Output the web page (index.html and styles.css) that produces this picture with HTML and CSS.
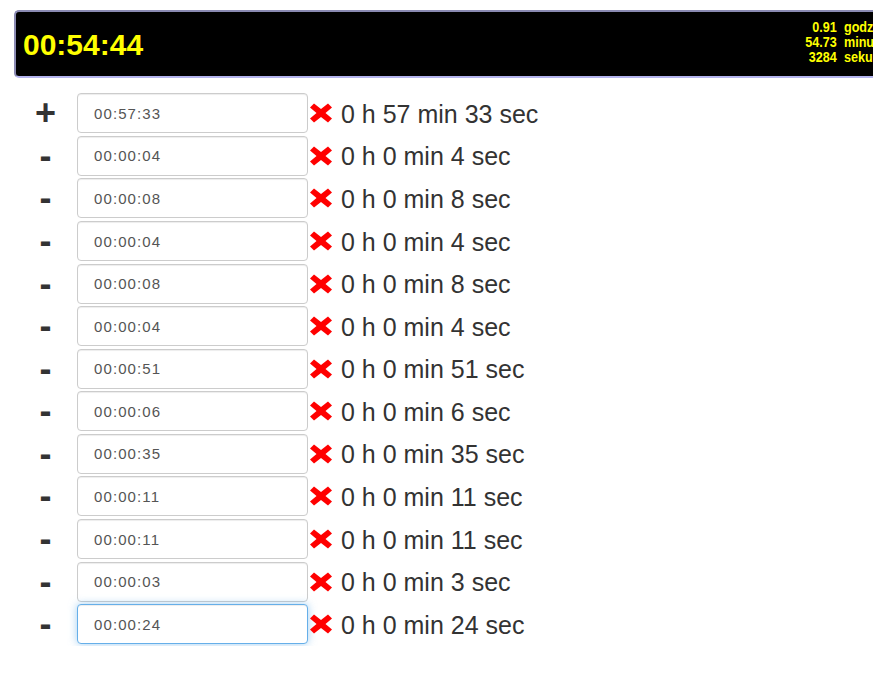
FILE: index.html
```html
<!DOCTYPE html>
<html lang="pl">
<head>
<meta charset="utf-8">
<title>Timer</title>
<link rel="stylesheet" href="styles.css">
</head>
<body>
<div class="display">
  <div class="clock">00:54:44</div>
  <table class="summary">
    <tr><td class="num">0.91</td><td class="unit">godzin</td></tr>
    <tr><td class="num">54.73</td><td class="unit">minut</td></tr>
    <tr><td class="num">3284</td><td class="unit">sekund</td></tr>
  </table>
</div>
<div class="rows">
  <div class="row"><span class="sign">+</span><input class="field" type="text" value="00:57:33"><svg class="del" viewBox="0 0 22 20"><path d="M0 4.5 L4 0.5 L11 6 L18 0.5 L22 4.5 L15.5 10 L22 15.5 L18 19.5 L11 14 L4 19.5 L0 15.5 L6.5 10 Z"/></svg><span class="label">0 h 57 min 33 sec</span></div>
  <div class="row"><span class="sign">-</span><input class="field" type="text" value="00:00:04"><svg class="del" viewBox="0 0 22 20"><path d="M0 4.5 L4 0.5 L11 6 L18 0.5 L22 4.5 L15.5 10 L22 15.5 L18 19.5 L11 14 L4 19.5 L0 15.5 L6.5 10 Z"/></svg><span class="label">0 h 0 min 4 sec</span></div>
  <div class="row"><span class="sign">-</span><input class="field" type="text" value="00:00:08"><svg class="del" viewBox="0 0 22 20"><path d="M0 4.5 L4 0.5 L11 6 L18 0.5 L22 4.5 L15.5 10 L22 15.5 L18 19.5 L11 14 L4 19.5 L0 15.5 L6.5 10 Z"/></svg><span class="label">0 h 0 min 8 sec</span></div>
  <div class="row"><span class="sign">-</span><input class="field" type="text" value="00:00:04"><svg class="del" viewBox="0 0 22 20"><path d="M0 4.5 L4 0.5 L11 6 L18 0.5 L22 4.5 L15.5 10 L22 15.5 L18 19.5 L11 14 L4 19.5 L0 15.5 L6.5 10 Z"/></svg><span class="label">0 h 0 min 4 sec</span></div>
  <div class="row"><span class="sign">-</span><input class="field" type="text" value="00:00:08"><svg class="del" viewBox="0 0 22 20"><path d="M0 4.5 L4 0.5 L11 6 L18 0.5 L22 4.5 L15.5 10 L22 15.5 L18 19.5 L11 14 L4 19.5 L0 15.5 L6.5 10 Z"/></svg><span class="label">0 h 0 min 8 sec</span></div>
  <div class="row"><span class="sign">-</span><input class="field" type="text" value="00:00:04"><svg class="del" viewBox="0 0 22 20"><path d="M0 4.5 L4 0.5 L11 6 L18 0.5 L22 4.5 L15.5 10 L22 15.5 L18 19.5 L11 14 L4 19.5 L0 15.5 L6.5 10 Z"/></svg><span class="label">0 h 0 min 4 sec</span></div>
  <div class="row"><span class="sign">-</span><input class="field" type="text" value="00:00:51"><svg class="del" viewBox="0 0 22 20"><path d="M0 4.5 L4 0.5 L11 6 L18 0.5 L22 4.5 L15.5 10 L22 15.5 L18 19.5 L11 14 L4 19.5 L0 15.5 L6.5 10 Z"/></svg><span class="label">0 h 0 min 51 sec</span></div>
  <div class="row"><span class="sign">-</span><input class="field" type="text" value="00:00:06"><svg class="del" viewBox="0 0 22 20"><path d="M0 4.5 L4 0.5 L11 6 L18 0.5 L22 4.5 L15.5 10 L22 15.5 L18 19.5 L11 14 L4 19.5 L0 15.5 L6.5 10 Z"/></svg><span class="label">0 h 0 min 6 sec</span></div>
  <div class="row"><span class="sign">-</span><input class="field" type="text" value="00:00:35"><svg class="del" viewBox="0 0 22 20"><path d="M0 4.5 L4 0.5 L11 6 L18 0.5 L22 4.5 L15.5 10 L22 15.5 L18 19.5 L11 14 L4 19.5 L0 15.5 L6.5 10 Z"/></svg><span class="label">0 h 0 min 35 sec</span></div>
  <div class="row"><span class="sign">-</span><input class="field" type="text" value="00:00:11"><svg class="del" viewBox="0 0 22 20"><path d="M0 4.5 L4 0.5 L11 6 L18 0.5 L22 4.5 L15.5 10 L22 15.5 L18 19.5 L11 14 L4 19.5 L0 15.5 L6.5 10 Z"/></svg><span class="label">0 h 0 min 11 sec</span></div>
  <div class="row"><span class="sign">-</span><input class="field" type="text" value="00:00:11"><svg class="del" viewBox="0 0 22 20"><path d="M0 4.5 L4 0.5 L11 6 L18 0.5 L22 4.5 L15.5 10 L22 15.5 L18 19.5 L11 14 L4 19.5 L0 15.5 L6.5 10 Z"/></svg><span class="label">0 h 0 min 11 sec</span></div>
  <div class="row"><span class="sign">-</span><input class="field" type="text" value="00:00:03"><svg class="del" viewBox="0 0 22 20"><path d="M0 4.5 L4 0.5 L11 6 L18 0.5 L22 4.5 L15.5 10 L22 15.5 L18 19.5 L11 14 L4 19.5 L0 15.5 L6.5 10 Z"/></svg><span class="label">0 h 0 min 3 sec</span></div>
  <div class="row"><span class="sign">-</span><input class="field field-focus" type="text" value="00:00:24"><svg class="del" viewBox="0 0 22 20"><path d="M0 4.5 L4 0.5 L11 6 L18 0.5 L22 4.5 L15.5 10 L22 15.5 L18 19.5 L11 14 L4 19.5 L0 15.5 L6.5 10 Z"/></svg><span class="label">0 h 0 min 24 sec</span></div>
</div>
</body>
</html>
```
FILE: styles.css
```css
html, body {
  margin: 0;
  padding: 0;
  overflow: hidden;
  background: #fff;
}
body {
  font-family: "Liberation Sans", Arial, sans-serif;
  color: #333;
}
.display {
  margin: 10px 0 0 14px;
  width: 878px;
  height: 64px;
  box-sizing: content-box;
  background: #000;
  border: 2px solid;
  border-color: #8a8ab2 #b4b4ee #b4b4ee #8a8ab2;
  border-radius: 5px;
  display: flex;
  align-items: center;
  justify-content: space-between;
  padding: 0 0 0 7px;
  color: #ffff00;
}
.clock {
  font-size: 30px;
  font-weight: bold;
  line-height: 1;
  padding-top: 1px;
}
.summary {
  border-collapse: collapse;
  font-family: "Liberation Sans", sans-serif;
  font-weight: bold;
  font-size: 14px;
  line-height: 15px;
  margin-right: 13px;
  margin-top: -4px;
  transform: scaleX(0.9);
  transform-origin: right center;
}
.summary td {
  padding: 0;
}
.summary .num {
  text-align: right;
  padding-right: 8px;
}
.summary .unit {
  text-align: left;
}
.rows {
  margin-top: 14px;
  padding-left: 14px;
}
.row {
  display: flex;
  align-items: center;
  height: 42.58px;
}
.sign {
  width: 63px;
  text-align: center;
  font-size: 36px;
  font-weight: bold;
  color: #333;
  line-height: 1;
}
.field {
  box-sizing: border-box;
  width: 231px;
  height: 40px;
  margin: 0;
  padding: 0 16px;
  border: 1px solid #ccc;
  border-radius: 4px;
  box-shadow: inset 0 1px 1px rgba(0,0,0,.075);
  font-family: "Liberation Sans", Arial, sans-serif;
  font-size: 15px;
  letter-spacing: 1.1px;
  color: #555;
  background: #fff;
  outline: none;
}
.field-focus {
  border-color: #66afe9;
  box-shadow: inset 0 1px 1px rgba(0,0,0,.075), 0 0 8px rgba(102,175,233,.6);
}
.del {
  width: 22px;
  height: 20px;
  margin-left: 2px;
  fill: #ff0000;
  flex: none;
}
.label {
  margin-left: 9px;
  font-size: 25px;
  color: #333;
  white-space: nowrap;
  padding-top: 2px;
}
```
